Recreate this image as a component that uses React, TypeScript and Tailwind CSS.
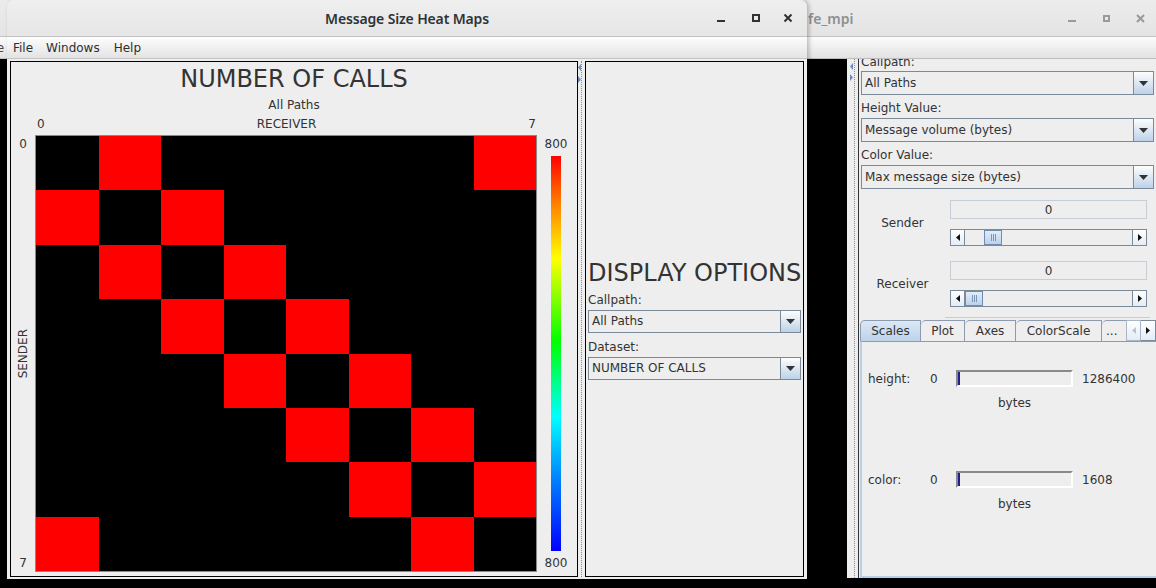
import React from 'react';

const cellRed = (r: number, c: number) => c === (r + 1) % 8 || c === (r + 7) % 8;

function Combo({ value, tall }: { value: string; tall?: boolean }) {
  return (
    <div className={`flex border border-[#7a8a99] ${tall ? 'h-[24px]' : 'h-[23px]'}`}>
      <div className="flex-1 flex items-center pl-[3px] bg-[#eeeeee] whitespace-nowrap overflow-hidden">{value}</div>
      <div className="w-[20px] border-l border-[#7a8a99] bg-linear-to-b from-[#fdfdfd] to-[#bdd2e8] flex items-center justify-center">
        <svg width="9" height="5" viewBox="0 0 9 5">
          <path d="M0 0H9L4.5 5Z" fill="#333" />
        </svg>
      </div>
    </div>
  );
}

function SplitArrows() {
  return (
    <>
      <svg width="3" height="7" viewBox="0 0 3 7">
        <path d="M3 0V7L0 3.5Z" fill="#6b8cb8" />
      </svg>
      <svg width="3" height="7" viewBox="0 0 3 7">
        <path d="M0 0V7L3 3.5Z" fill="#6b8cb8" />
      </svg>
    </>
  );
}

function ScrollBar({ offset }: { offset: string }) {
  return (
    <div className="flex h-[17px] mt-[10px]">
      <div className="w-[15px] border border-[#7a8a99] bg-linear-to-b from-white to-[#e4ecf5] flex items-center justify-center">
        <svg width="4" height="7" viewBox="0 0 4 7">
          <path d="M4 0V7L0 3.5Z" fill="#111" />
        </svg>
      </div>
      <div className="flex-1 flex border-y border-[#7a8a99] bg-[#eeeeee]">
        <div className={`${offset} w-[18px] h-full border border-[#6f8db3] bg-linear-to-b from-[#e2ecf7] to-[#bcd2ea] flex items-center justify-center gap-[1px]`}>
          <div className="w-[1px] h-[7px] bg-[#7a96bb]" />
          <div className="w-[1px] h-[7px] bg-[#7a96bb]" />
          <div className="w-[1px] h-[7px] bg-[#7a96bb]" />
        </div>
      </div>
      <div className="w-[15px] border border-[#7a8a99] bg-linear-to-b from-white to-[#e4ecf5] flex items-center justify-center">
        <svg width="4" height="7" viewBox="0 0 4 7">
          <path d="M0 0V7L4 3.5Z" fill="#111" />
        </svg>
      </div>
    </div>
  );
}

function SliderBlock({ label, offset, className }: { label: string; offset: string; className: string }) {
  return (
    <div className={`flex items-center ${className}`}>
      <div className="w-[83px] text-center">{label}</div>
      <div className="ml-[6px] w-[197px] flex flex-col">
        <div className="h-[19px] border border-[#c5cdd6] flex items-center justify-center">0</div>
        <ScrollBar offset={offset} />
      </div>
    </div>
  );
}

function ScaleRow({ label, max, className }: { label: string; max: string; className?: string }) {
  return (
    <div className={`flex items-start ${className ?? ''}`}>
      <div className="w-[62px] h-[17px] flex items-center">{label}</div>
      <div className="w-[26px] h-[17px] flex items-center">0</div>
      <div className="w-[117px] flex flex-col items-center">
        <div className="w-[117px] h-[17px] border-2 border-t-[#8a8a8a] border-l-[#8a8a8a] border-r-white border-b-white bg-[#eeeeee] flex">
          <div className="w-[2px] h-full bg-[#1f1f8f]" />
        </div>
        <div className="mt-[9px] leading-[14px]">bytes</div>
      </div>
      <div className="ml-[9px] h-[17px] flex items-center">{max}</div>
    </div>
  );
}

function BackWindow() {
  return (
    <div className="absolute left-0 top-0 w-[1156px] h-[578px] flex flex-col">
      <div className="h-[37px] border-b border-[#c4c4c4] bg-linear-to-b from-[#ececec] to-[#e4e4e4] flex items-center">
        <span className="pl-[808px] font-['Noto_Sans',sans-serif] font-semibold text-[14px] text-[#8d9091]">fe_mpi</span>
        <div className="ml-auto flex items-center pr-[11px]">
          <svg width="9" height="10" viewBox="0 0 9 10">
            <rect x="0" y="7" width="8" height="2" fill="#9a9a9a" />
          </svg>
          <svg width="7" height="7" viewBox="0 0 7 7" className="ml-[26px]">
            <rect x="1" y="1" width="5" height="5" fill="none" stroke="#9a9a9a" strokeWidth="2" />
          </svg>
          <svg width="9" height="9" viewBox="0 0 9 9" className="ml-[26px]">
            <path d="M1 1L8 8M8 1L1 8" stroke="#9a9a9a" strokeWidth="2" />
          </svg>
        </div>
      </div>
      <div className="h-[22px] border-b border-[#bdbdbd] bg-linear-to-b from-[#fcfcfc] to-[#e2e2e2] flex items-center">
        <span className="-ml-[16px] text-[#444]">File</span>
      </div>
      <div className="flex-1 flex min-h-0">
        <div className="flex-1 bg-black" />
        <div className="w-[11px] bg-[#eeeeee] flex pl-[3px]">
          <div className="w-[3px] flex flex-col pt-[4px] gap-[4px]">
            <SplitArrows />
          </div>
          <div className="ml-[1px] w-[1px] border-l border-dotted border-[#8a8a8a]" />
        </div>
        <div className="w-[298px] border-l border-[#333] bg-[#eeeeee] flex flex-col">
          <div className="h-[259px] overflow-hidden flex flex-col px-[2px]">
            <div className="-mt-[4px] leading-[14px]">Callpath:</div>
            <div className="mt-[2px]">
              <Combo value="All Paths" tall />
            </div>
            <div className="mt-[6px] leading-[14px]">Height Value:</div>
            <div className="mt-[3px]">
              <Combo value="Message volume (bytes)" tall />
            </div>
            <div className="mt-[6px] leading-[14px]">Color Value:</div>
            <div className="mt-[3px]">
              <Combo value="Max message size (bytes)" tall />
            </div>
            <SliderBlock label="Sender" offset="ml-[19px]" className="mt-[11px]" />
            <SliderBlock label="Receiver" offset="ml-0" className="mt-[15px]" />
            <div className="mt-[10px] ml-[84px] w-[205px] h-[10px] shrink-0 border border-[#c5cdd6]" />
          </div>
          <div className="mt-[2px] h-[21px] flex items-stretch pl-[1px]">
            <div className="w-[61px] border border-b-0 border-[#8c9bb0] rounded-tl-[5px] bg-linear-to-b from-[#dce8f5] to-[#bcd3ea] flex items-center justify-center">Scales</div>
            <div className="w-[44px] border border-l-0 border-b-0 border-[#8c9bb0] rounded-tl-[5px] flex items-center justify-center">Plot</div>
            <div className="w-[51px] border border-l-0 border-b-0 border-[#8c9bb0] rounded-tl-[5px] flex items-center justify-center">Axes</div>
            <div className="w-[86px] border border-l-0 border-b-0 border-[#8c9bb0] rounded-tl-[5px] flex items-center justify-center">ColorScale</div>
            <div className="w-[24px] border-t border-[#8c9bb0] rounded-tl-[5px] flex items-center pl-[4px] overflow-hidden">...</div>
            <div className="w-[15px] border border-[#a9b6c6] bg-linear-to-b from-white to-[#e4ecf5] flex items-center justify-center">
              <svg width="4" height="7" viewBox="0 0 4 7">
                <path d="M4 0V7L0 3.5Z" fill="#b8c4d2" />
              </svg>
            </div>
            <div className="w-[15px] border border-l-0 border-[#7a8a99] bg-linear-to-b from-white to-[#e4ecf5] flex items-center justify-center">
              <svg width="4" height="7" viewBox="0 0 4 7">
                <path d="M0 0V7L4 3.5Z" fill="#111" />
              </svg>
            </div>
          </div>
          <div className="flex-1 ml-[1px] border-t border-[#8c9bb0] border-l-2 border-l-[#b8cfe5] border-b-2 border-b-[#b8cfe5] pt-[28px] pl-[6px]">
            <ScaleRow label="height:" max="1286400" />
            <ScaleRow label="color:" max="1608" className="mt-[61px]" />
          </div>
        </div>
      </div>
    </div>
  );
}

function FrontWindow() {
  return (
    <div className="absolute left-[7px] top-0 w-[800px] h-[579px] rounded-t-[7px] bg-[#eeeeee] flex flex-col overflow-hidden shadow-[2px_0_4px_rgba(0,0,0,0.25)]">
      <div className="h-[37px] border-b border-[#c2c2c2] bg-linear-to-b from-[#efefef] to-[#e6e6e6] grid grid-cols-[1fr_auto_1fr] items-center">
        <div />
        <span className="font-['Noto_Sans',sans-serif] font-semibold text-[14px] tracking-[-0.15px] text-[#2e3436]">Message Size Heat Maps</span>
        <div className="flex items-center justify-end pr-[14px]">
          <svg width="10" height="10" viewBox="0 0 10 10">
            <rect x="1" y="7" width="8" height="2" fill="#2e3436" />
          </svg>
          <svg width="8" height="8" viewBox="0 0 8 8" className="ml-[26px]">
            <rect x="1" y="1" width="6" height="6" fill="none" stroke="#2e3436" strokeWidth="2" />
          </svg>
          <svg width="10" height="10" viewBox="0 0 10 10" className="ml-[23px]">
            <path d="M1.5 1.5L8.5 8.5M8.5 1.5L1.5 8.5" stroke="#2e3436" strokeWidth="2" />
          </svg>
        </div>
      </div>
      <div className="h-[22px] border-b border-[#c4c4c4] bg-linear-to-b from-[#fdfdfd] to-[#e3e3e3] flex items-center pl-[6px] gap-[13px] text-[#2e2e2e]">
        <span>File</span>
        <span className="mr-[1px]">Windows</span>
        <span>Help</span>
      </div>
      <div className="flex-1 flex pt-[2px] px-[3px] pb-[2px] min-h-0">
        <div className="w-[568px] border border-black flex flex-col">
          <div className="pt-[3px] text-[24px] leading-[28px] text-center">NUMBER OF CALLS</div>
          <div className="mt-[5px] leading-[14px] text-center">All Paths</div>
          <div className="mt-[5px] ml-[24px] w-[502px] flex justify-between leading-[14px] pl-[2px] pr-[1px]">
            <span>0</span>
            <span>RECEIVER</span>
            <span>7</span>
          </div>
          <div className="mt-[4px] flex">
            <div className="w-[24px] flex flex-col items-center justify-between py-[2px] leading-[14px]">
              <span>0</span>
              <span className="[writing-mode:vertical-rl] rotate-180">SENDER</span>
              <span>7</span>
            </div>
            <div className="w-[502px] h-[437px] border border-[#8a8a8a] grid grid-cols-8 grid-rows-8">
              {Array.from({ length: 64 }, (_, i) => {
                const r = Math.floor(i / 8);
                const c = i % 8;
                return <div key={i} className={cellRed(r, c) ? 'bg-[#ff0000]' : 'bg-black'} />;
              })}
            </div>
            <div className="w-[40px] pr-[2px] flex flex-col items-center py-[2px] leading-[14px]">
              <span>800</span>
              <div className="mt-[5px] w-[10px] flex-1 bg-[linear-gradient(to_bottom,#ff0000_0%,#ff8000_12%,#ffff00_26%,#00ff00_47%,#00ffff_66%,#0080ff_82%,#0000ff_100%)]" />
              <span className="mt-[5px]">800</span>
            </div>
          </div>
        </div>
        <div className="w-[7px] flex">
          <div className="w-[3px] flex flex-col pt-[3px] gap-[5px]">
            <SplitArrows />
          </div>
          <div className="w-[1px] border-l border-dotted border-[#8a8a8a]" />
        </div>
        <div className="w-[219px] border border-black flex flex-col justify-center px-[2px]">
          <div className="text-[24px] leading-[28px] text-center whitespace-nowrap">DISPLAY OPTIONS</div>
          <div className="mt-[6px] leading-[14px]">Callpath:</div>
          <div className="mt-[3px]">
            <Combo value="All Paths" />
          </div>
          <div className="mt-[7px] leading-[14px]">Dataset:</div>
          <div className="mt-[3px]">
            <Combo value="NUMBER OF CALLS" />
          </div>
        </div>
      </div>
    </div>
  );
}

export default function App() {
  return (
    <div className="relative w-[1156px] h-[588px] overflow-hidden bg-black font-['DejaVu_Sans',sans-serif] text-[12px] text-[#333]">
      <BackWindow />
      <FrontWindow />
    </div>
  );
}
